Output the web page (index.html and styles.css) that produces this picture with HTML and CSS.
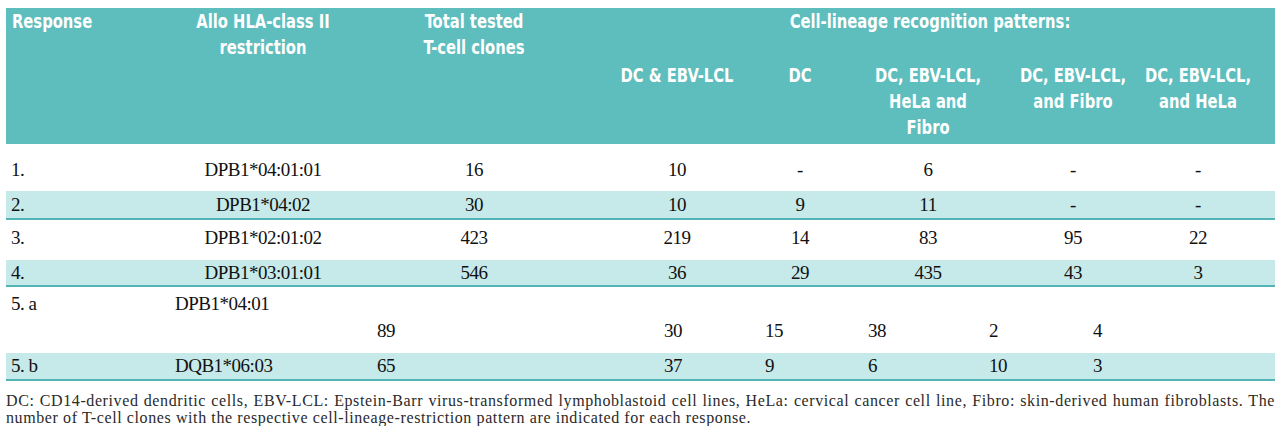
FILE: index.html
```html
<!DOCTYPE html>
<html>
<head>
<meta charset="utf-8">
<link rel="stylesheet" href="styles.css">
</head>
<body>
<div class="tbl">
  <div class="head">
    <div class="h c1 lft"><span>Response</span></div>
    <div class="h c2 ctr"><span>Allo HLA-class II<br>restriction</span></div>
    <div class="h c3 ctr"><span>Total tested<br>T-cell clones</span></div>
    <div class="h span ctr"><span>Cell-lineage recognition patterns:</span></div>
    <div class="h sub s4 ctr"><span>DC &amp; EBV-LCL</span></div>
    <div class="h sub s5 ctr"><span>DC</span></div>
    <div class="h sub s6 ctr"><span>DC, EBV-LCL,<br>HeLa and<br>Fibro</span></div>
    <div class="h sub s7 ctr"><span>DC, EBV-LCL,<br>and Fibro</span></div>
    <div class="h sub s8 ctr"><span>DC, EBV-LCL,<br>and HeLa</span></div>
  </div>

  <div class="row r1">
    <div class="first">1.</div><div>DPB1*04:01:01</div><div>16</div><div>10</div><div>-</div><div>6</div><div>-</div><div>-</div>
  </div>
  <div class="row band r2">
    <div class="first">2.</div><div>DPB1*04:02</div><div>30</div><div>10</div><div>9</div><div>11</div><div>-</div><div>-</div>
  </div>
  <div class="row r3">
    <div class="first">3.</div><div>DPB1*02:01:02</div><div>423</div><div>219</div><div>14</div><div>83</div><div>95</div><div>22</div>
  </div>
  <div class="row band r4">
    <div class="first">4.</div><div>DPB1*03:01:01</div><div>546</div><div>36</div><div>29</div><div>435</div><div>43</div><div>3</div>
  </div>
  <div class="row5 r5a">
    <div class="first">5. a</div><div>DPB1*04:01</div><div class="low">89</div><div class="low">30</div><div class="low">15</div><div class="low">38</div><div class="low">2</div><div class="low">4</div>
  </div>
  <div class="row5 band r5b">
    <div class="first">5. b</div><div>DQB1*06:03</div><div>65</div><div>37</div><div>9</div><div>6</div><div>10</div><div>3</div>
  </div>
  <p class="note">DC: CD14-derived dendritic cells, EBV-LCL: Epstein-Barr virus-transformed lymphoblastoid cell lines, HeLa: cervical cancer cell line, Fibro: skin-derived human fibroblasts. The number of T-cell clones with the respective cell-lineage-restriction pattern are indicated for each response.</p>
</div>
</body>
</html>
```

FILE: styles.css
```css
html, body {
  margin: 0;
  padding: 0;
  background: #ffffff;
}
.tbl {
  margin: 8px 0 0 6px;
  width: 1269px;
  font-family: "Liberation Serif", "Times New Roman", serif;
  color: #111;
}
.head {
  background: #5ebdbd;
  height: 136px;
  display: grid;
  grid-template-columns: 157px 200px 222px 184px 62px 194px 96px 154px;
  grid-template-rows: 54px auto;
  font-family: "DejaVu Sans Condensed", "DejaVu Sans", sans-serif;
  font-stretch: condensed;
  font-weight: bold;
  font-size: 20px;
  line-height: 26px;
  color: #ffffff;
}
.h {
  white-space: nowrap;
  transform: scaleX(0.82);
}
.ctr {
  display: flex;
  justify-content: center;
  align-items: flex-start;
  text-align: center;
  transform-origin: center top;
}
.lft {
  transform-origin: left top;
}
.c1 { grid-column: 1; grid-row: 1; margin-left: 6px; }
.c2 { grid-column: 2; grid-row: 1 / span 2; }
.c3 { grid-column: 3; grid-row: 1 / span 2; }
.span { grid-column: 4 / 9; grid-row: 1; }
.s4 { grid-column: 4; grid-row: 2; }
.s5 { grid-column: 5; grid-row: 2; }
.s6 { grid-column: 6; grid-row: 2; }
.s7 { grid-column: 7; grid-row: 2; }
.s8 { grid-column: 8; grid-row: 2; }

.row, .row5 {
  display: grid;
  align-items: center;
  font-size: 19px;
  letter-spacing: -0.5px;
  line-height: 22px;
  box-sizing: border-box;
}
.row {
  grid-template-columns: 157px 200px 222px 184px 62px 194px 96px 154px;
  text-align: center;
}
.row5 {
  grid-template-columns: 169px 202px 287px 101px 103px 121px 104px 182px;
  text-align: left;
  align-items: start;
}
.first {
  text-align: left;
  padding-left: 5px;
}
.band {
  background: #c6e9ea;
  border-bottom: 2px solid #52b4b4;
}
.r1 { height: 47px; padding-top: 5px; }
.r2 { height: 29px; }
.r3 { height: 40px; padding-bottom: 4px; }
.r4 { height: 27px; }
.r5a { height: 66px; padding-top: 6px; }
.r5b { height: 28px; padding-top: 2px; }
.low { padding-top: 27px; }

.note {
  margin: 11px 0 0 0;
  font-size: 16px;
  letter-spacing: 0.6px;
  line-height: 17px;
  text-align: justify;
  color: #2a2a2a;
}
```
